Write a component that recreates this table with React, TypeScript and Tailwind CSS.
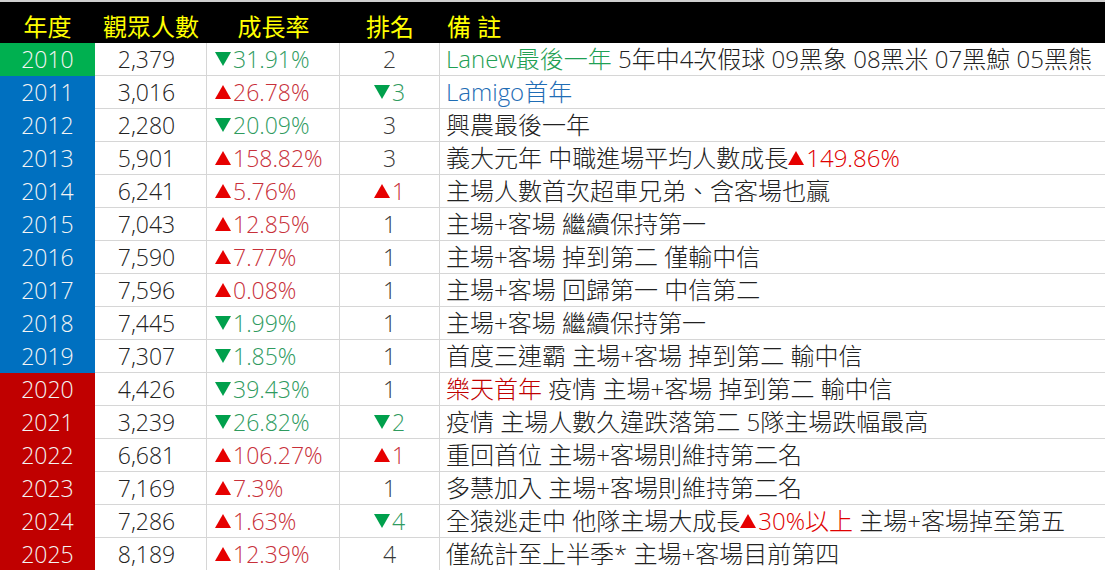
import React from "react";

type Seg = { t: string; c?: string; tri?: "up" | "down" };
type Row = {
  year: string;
  yc: string;
  v: string;
  g: "up" | "down";
  gv: string;
  r: string;
  rt?: "up" | "down";
  note: Seg[];
};

const RED_T = "#c8303a";
const GREEN_T = "#2f9b5f";
const RED_TRI = "#e60000";
const GREEN_TRI = "#00a04c";

const G = "#00b050";
const B = "#0070c0";
const R = "#c00000";

const rows: Row[] = [
  { year: "2010", yc: G, v: "2,379", g: "down", gv: "31.91%", r: "2", note: [{ t: "Lanew最後一年", c: "#1fa054" }, { t: " 5年中4次假球 09黑象 08黑米 07黑鯨 05黑熊" }] },
  { year: "2011", yc: B, v: "3,016", g: "up", gv: "26.78%", r: "3", rt: "down", note: [{ t: "Lamigo首年", c: "#1f6db5" }] },
  { year: "2012", yc: B, v: "2,280", g: "down", gv: "20.09%", r: "3", note: [{ t: "興農最後一年" }] },
  { year: "2013", yc: B, v: "5,901", g: "up", gv: "158.82%", r: "3", note: [{ t: "義大元年 中職進場平均人數成長" }, { t: "149.86%", c: "#e00000", tri: "up" }] },
  { year: "2014", yc: B, v: "6,241", g: "up", gv: "5.76%", r: "1", rt: "up", note: [{ t: "主場人數首次超車兄弟、含客場也贏" }] },
  { year: "2015", yc: B, v: "7,043", g: "up", gv: "12.85%", r: "1", note: [{ t: "主場+客場 繼續保持第一" }] },
  { year: "2016", yc: B, v: "7,590", g: "up", gv: "7.77%", r: "1", note: [{ t: "主場+客場 掉到第二 僅輸中信" }] },
  { year: "2017", yc: B, v: "7,596", g: "up", gv: "0.08%", r: "1", note: [{ t: "主場+客場 回歸第一 中信第二" }] },
  { year: "2018", yc: B, v: "7,445", g: "down", gv: "1.99%", r: "1", note: [{ t: "主場+客場 繼續保持第一" }] },
  { year: "2019", yc: B, v: "7,307", g: "down", gv: "1.85%", r: "1", note: [{ t: "首度三連霸 主場+客場 掉到第二 輸中信" }] },
  { year: "2020", yc: R, v: "4,426", g: "down", gv: "39.43%", r: "1", note: [{ t: "樂天首年", c: "#c00000" }, { t: " 疫情 主場+客場 掉到第二 輸中信" }] },
  { year: "2021", yc: R, v: "3,239", g: "down", gv: "26.82%", r: "2", rt: "down", note: [{ t: "疫情 主場人數久違跌落第二 5隊主場跌幅最高" }] },
  { year: "2022", yc: R, v: "6,681", g: "up", gv: "106.27%", r: "1", rt: "up", note: [{ t: "重回首位 主場+客場則維持第二名" }] },
  { year: "2023", yc: R, v: "7,169", g: "up", gv: "7.3%", r: "1", note: [{ t: "多慧加入 主場+客場則維持第二名" }] },
  { year: "2024", yc: R, v: "7,286", g: "up", gv: "1.63%", r: "4", rt: "down", note: [{ t: "全猿逃走中 他隊主場大成長" }, { t: "30%以上", c: "#e00000", tri: "up" }, { t: " 主場+客場掉至第五" }] },
  { year: "2025", yc: R, v: "8,189", g: "up", gv: "12.39%", r: "4", note: [{ t: "僅統計至上半季* 主場+客場目前第四" }] },
];

function Tri({ dir }: { dir: "up" | "down" }) {
  const fill = dir === "up" ? RED_TRI : GREEN_TRI;
  return (
    <svg width="16" height="14" viewBox="0 0 16 14" className="inline-block mr-[2px] shrink-0">
      {dir === "up" ? <polygon points="8,0 16,14 0,14" fill={fill} /> : <polygon points="0,0 16,0 8,14" fill={fill} />}
    </svg>
  );
}

const font = { fontFamily: "'Open Sans', 'Noto Sans CJK TC', sans-serif" };

export default function App() {
  return (
    <div className="w-[1105px] h-[570px] overflow-hidden bg-white text-[23px] font-light text-[#222]" style={font}>
      <div className="border-t-2 border-[#cfcfcf] bg-black h-[43px] grid grid-cols-[95px_112px_133px_100px_1fr] text-[#ffff00] text-[24px] font-normal leading-[30px] pt-[10px]">
        <div className="text-center">年度</div>
        <div className="text-center">觀眾人數</div>
        <div className="text-center">成長率</div>
        <div className="text-center">排名</div>
        <div className="pl-[7px]">備 註</div>
      </div>
      {rows.map((row) => (
        <div key={row.year} className="grid grid-cols-[95px_112px_133px_100px_1fr] h-[33px] leading-[32px]">
          <div className="text-center text-[#f4f4f4]" style={{ backgroundColor: row.yc }}>
            {row.year}
          </div>
          <div className="text-center pr-[8px] border-b border-r border-[#d6d6d6]">{row.v}</div>
          <div className="flex items-center pl-[8px] border-b border-r border-[#d6d6d6]" style={{ color: row.g === "up" ? RED_T : GREEN_T }}>
            <Tri dir={row.g} />
            <span>{row.gv}</span>
          </div>
          <div className="flex items-center justify-center border-b border-r border-[#d6d6d6]" style={{ color: row.rt ? (row.rt === "up" ? RED_T : GREEN_T) : "#383838" }}>
            {row.rt && <Tri dir={row.rt} />}
            <span>{row.r}</span>
          </div>
          <div className="flex items-center pl-[6px] text-[24px] border-b border-[#d6d6d6] whitespace-pre overflow-hidden">
            {row.note.map((s, i) => (
              <span key={i} className="inline-flex items-center" style={{ color: s.c }}>
                {s.tri && <Tri dir={s.tri} />}
                {s.t}
              </span>
            ))}
          </div>
        </div>
      ))}
    </div>
  );
}
